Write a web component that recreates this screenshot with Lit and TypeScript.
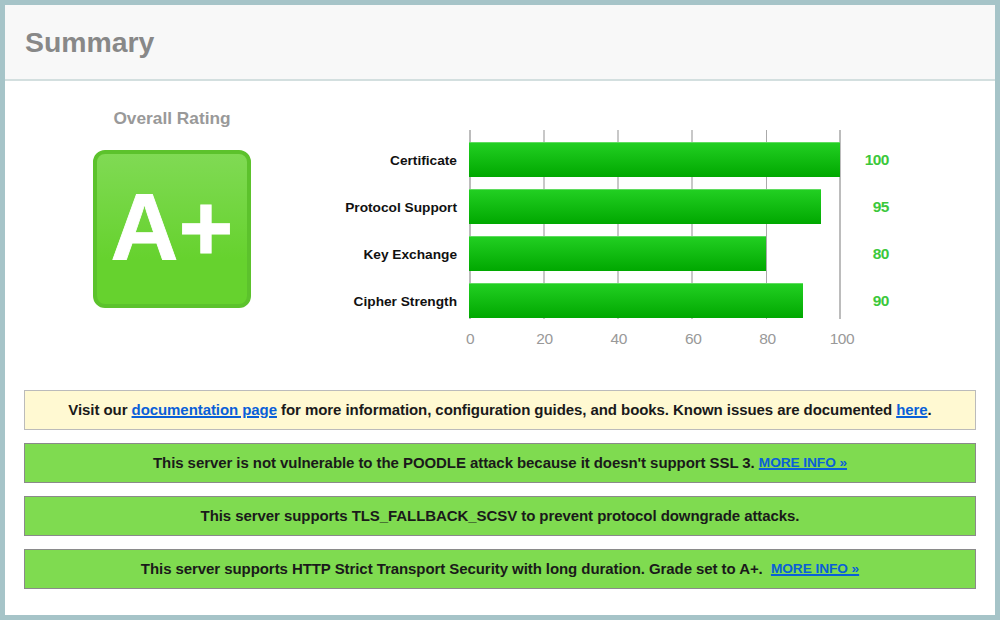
import { LitElement, html, css } from "lit";
import { customElement } from "lit/decorators.js";

const ROWS = [
  { label: "Certificate", value: 100 },
  { label: "Protocol Support", value: 95 },
  { label: "Key Exchange", value: 80 },
  { label: "Cipher Strength", value: 90 },
];
const TICKS = [0, 20, 40, 60, 80, 100];
const LINE_KIND: Record<number, string> = {
  0: "edge",
  20: "soft",
  40: "soft",
  60: "soft",
  80: "thin",
  100: "edge",
};

@customElement("app-root")
export class AppRoot extends LitElement {
  static styles = css`
    :host {
      display: block;
      width: 1000px;
      height: 620px;
      box-sizing: border-box;
      border: 5px solid #a6c4c8;
      background: #fff;
      font-family: "Liberation Sans", Arial, sans-serif;
      overflow: hidden;
    }
    .header {
      box-sizing: border-box;
      height: 76px;
      background: #f8f8f8;
      border-bottom: 2px solid #d3dfdf;
      display: flex;
      align-items: center;
      padding: 1px 0 0 20px;
      font-size: 28.4px;
      font-weight: bold;
      color: #888;
    }
    .top {
      display: flex;
      height: 309px;
    }
    .rating {
      width: 334px;
      flex: none;
      display: flex;
      flex-direction: column;
      align-items: center;
      padding-top: 26px;
      box-sizing: border-box;
    }
    .rating-title {
      font-size: 17.3px;
      line-height: 22px;
      font-weight: bold;
      color: #999;
    }
    .badge {
      margin-top: 21px;
      width: 158px;
      height: 158px;
      box-sizing: border-box;
      border-radius: 12px;
      border: 4px solid #5cc22c;
      background: linear-gradient(#80da54, #66d22e 70%);
      display: flex;
      align-items: center;
      justify-content: center;
      padding-bottom: 2px;
      color: #fff;
      font-size: 94px;
      font-weight: bold;
      line-height: 1;
      -webkit-text-stroke: 0.8px #fff;
    }
    .chart {
      margin-top: 49px;
      display: grid;
      grid-template-columns: 130px 372px 48px;
      align-self: flex-start;
    }
    .labels {
      display: flex;
      flex-direction: column;
      gap: 12px;
      padding-top: 12px;
      padding-right: 12px;
    }
    .label {
      height: 35px;
      box-sizing: border-box;
      padding-top: 1px;
      display: flex;
      align-items: center;
      justify-content: flex-end;
      font-size: 13.7px;
      font-weight: bold;
      color: #111;
      white-space: nowrap;
    }
    .plot {
      position: relative;
      height: 189px;
      box-sizing: border-box;
      padding-top: 12px;
      display: flex;
      flex-direction: column;
      gap: 12px;
    }
    .grid {
      position: absolute;
      inset: 0;
      display: flex;
      justify-content: space-between;
    }
    .line {
      width: 2px;
    }
    .line.edge {
      background: #bcbcbc;
    }
    .line.soft {
      background: #c8c8c8;
    }
    .line.thin {
      width: 1px;
      margin: 0 0 0 1px;
      background: #aaa;
    }
    .track {
      position: relative;
      width: 371px;
      height: 35px;
    }
    .bar {
      height: 100%;
      box-sizing: border-box;
      border-top: 1px solid #5fdc5f;
      background: linear-gradient(#22cf22, #00a800);
    }
    .values {
      display: flex;
      flex-direction: column;
      gap: 12px;
      padding-top: 12px;
    }
    .value {
      height: 35px;
      display: flex;
      align-items: center;
      justify-content: flex-end;
      font-size: 15.5px;
      letter-spacing: -0.5px;
      font-weight: bold;
      color: #3cc83c;
    }
    .ticks {
      grid-column: 2;
      display: flex;
      justify-content: space-between;
      margin: 10px -2px 0 0;
      font-size: 15.5px;
      letter-spacing: -0.4px;
      line-height: 20px;
      color: #999;
    }
    .tick {
      width: 2px;
      display: flex;
      justify-content: center;
    }
    .boxes {
      display: flex;
      flex-direction: column;
      gap: 13px;
      padding: 0 19px;
    }
    .box {
      height: 40px;
      box-sizing: border-box;
      padding-bottom: 1px;
      display: flex;
      align-items: center;
      justify-content: center;
      font-size: 15px;
      letter-spacing: -0.07px;
      font-weight: bold;
      color: #1a1a1a;
      white-space: pre;
    }
    .note {
      background: #fff9d2;
      border: 1px solid #bbb;
    }
    .ok {
      background: #7fdb50;
      border: 1px solid #8a8a8a;
    }
    a {
      color: #0a5fd8;
      text-decoration: underline;
      text-decoration-thickness: 2px;
    }
    .more {
      font-size: 13.7px;
    }
  `;

  render() {
    return html`
      <div class="header">Summary</div>
      <div class="top">
        <div class="rating">
          <div class="rating-title">Overall Rating</div>
          <div class="badge">A+</div>
        </div>
        <div class="chart">
          <div class="labels">
            ${ROWS.map((r) => html`<div class="label">${r.label}</div>`)}
          </div>
          <div class="plot">
            <div class="grid">
              ${TICKS.map((t) => html`<div class="line ${LINE_KIND[t]}"></div>`)}
            </div>
            ${ROWS.map(
              (r) => html`<div class="track">
                <div class="bar" style="width:${r.value}%"></div>
              </div>`
            )}
          </div>
          <div class="values">
            ${ROWS.map((r) => html`<div class="value">${r.value}</div>`)}
          </div>
          <div class="ticks">
            ${TICKS.map((t) => html`<div class="tick">${t}</div>`)}
          </div>
        </div>
      </div>
      <div class="boxes">
        <div class="box note">Visit our <a href="#">documentation page</a> for more information, configuration guides, and books. Known issues are documented <a href="#">here</a>.</div>
        <div class="box ok">This server is not vulnerable to the POODLE attack because it doesn't support SSL 3. <a class="more" href="#">MORE INFO »</a></div>
        <div class="box ok">This server supports TLS_FALLBACK_SCSV to prevent protocol downgrade attacks.</div>
        <div class="box ok">This server supports HTTP Strict Transport Security with long duration. Grade set to A+.  <a class="more" href="#">MORE INFO »</a></div>
      </div>
    `;
  }
}
